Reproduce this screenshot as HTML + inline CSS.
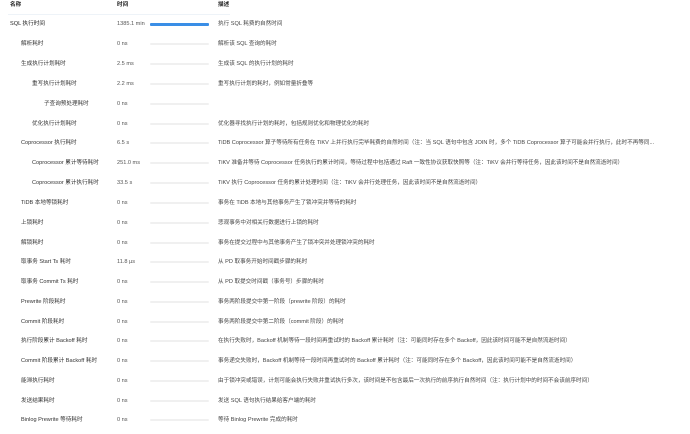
<!DOCTYPE html>
<html><head><meta charset="utf-8"><style>
html,body{margin:0;padding:0;background:#fff;width:690px;height:434px;overflow:hidden}
body{font-family:"Liberation Sans","Noto Sans CJK SC",sans-serif;font-size:5.6px;color:#333;position:relative}
.r{position:absolute;left:0;width:690px;height:10px;line-height:10px;white-space:nowrap}
.n{position:absolute}
.t{position:absolute;left:117px;color:#555}
.b{position:absolute;left:150px;top:4px;width:59px;height:2px;background:#f0f0f0;border-radius:1px}
.d{position:absolute;left:218px;color:#444}
.h{font-weight:bold;color:#222}
</style></head><body>
<div class="r h" style="top:0"><span class="n" style="left:10px">名称</span><span class="t" style="color:#222">时间</span><span class="d" style="color:#222">描述</span></div>
<div style="position:absolute;left:8px;top:14px;width:222px;height:1px;background:#eef3f8"></div>
<div class="r" style="top:19px"><span class="n" style="left:10px;color:#222">SQL 执行时间</span><span class="t">1385.1 min</span><span class="b" style="background:#3a8ee6;height:3px;top:3.5px"></span><span class="d">执行 SQL 耗费的自然时间</span></div>
<div class="r" style="top:39px"><span class="n" style="left:21px">解析耗时</span><span class="t">0 ns</span><span class="b"></span><span class="d">解析该 SQL 查询的耗时</span></div>
<div class="r" style="top:59px"><span class="n" style="left:21px">生成执行计划耗时</span><span class="t">2.5 ms</span><span class="b"></span><span class="d">生成该 SQL 的执行计划的耗时</span></div>
<div class="r" style="top:79px"><span class="n" style="left:32px">重写执行计划耗时</span><span class="t">2.2 ms</span><span class="b"></span><span class="d">重写执行计划的耗时，例如常量折叠等</span></div>
<div class="r" style="top:99px"><span class="n" style="left:44px">子查询预处理耗时</span><span class="t">0 ns</span><span class="b"></span></div>
<div class="r" style="top:119px"><span class="n" style="left:32px">优化执行计划耗时</span><span class="t">0 ns</span><span class="b"></span><span class="d">优化器寻找执行计划的耗时，包括规则优化和物理优化的耗时</span></div>
<div class="r" style="top:138px"><span class="n" style="left:21px">Coprocessor 执行耗时</span><span class="t">6.5 s</span><span class="b"></span><span class="d">TiDB Coprocessor 算子等待所有任务在 TiKV 上并行执行完毕耗费的自然时间（注：当 SQL 语句中包含 JOIN 时，多个 TiDB Coprocessor 算子可能会并行执行，此时不再等同...</span></div>
<div class="r" style="top:158px"><span class="n" style="left:32px">Coprocessor 累计等待耗时</span><span class="t">251.0 ms</span><span class="b"></span><span class="d">TiKV 准备并等待 Coprocessor 任务执行的累计时间，等待过程中包括通过 Raft 一致性协议获取快照等（注：TiKV 会并行等待任务，因此该时间不是自然流逝时间）</span></div>
<div class="r" style="top:178px"><span class="n" style="left:32px">Coprocessor 累计执行耗时</span><span class="t">33.5 s</span><span class="b"></span><span class="d">TiKV 执行 Coprocessor 任务的累计处理时间（注：TiKV 会并行处理任务，因此该时间不是自然流逝时间）</span></div>
<div class="r" style="top:198px"><span class="n" style="left:21px">TiDB 本地等锁耗时</span><span class="t">0 ns</span><span class="b"></span><span class="d">事务在 TiDB 本地与其他事务产生了锁冲突并等待的耗时</span></div>
<div class="r" style="top:218px"><span class="n" style="left:21px">上锁耗时</span><span class="t">0 ns</span><span class="b"></span><span class="d">悲观事务中对相关行数据进行上锁的耗时</span></div>
<div class="r" style="top:238px"><span class="n" style="left:21px">解锁耗时</span><span class="t">0 ns</span><span class="b"></span><span class="d">事务在提交过程中与其他事务产生了锁冲突并处理锁冲突的耗时</span></div>
<div class="r" style="top:257px"><span class="n" style="left:21px">取事务 Start Ts 耗时</span><span class="t">11.8 µs</span><span class="b"></span><span class="d">从 PD 取事务开始时间戳步骤的耗时</span></div>
<div class="r" style="top:277px"><span class="n" style="left:21px">取事务 Commit Ts 耗时</span><span class="t">0 ns</span><span class="b"></span><span class="d">从 PD 取提交时间戳（事务号）步骤的耗时</span></div>
<div class="r" style="top:297px"><span class="n" style="left:21px">Prewrite 阶段耗时</span><span class="t">0 ns</span><span class="b"></span><span class="d">事务两阶段提交中第一阶段（prewrite 阶段）的耗时</span></div>
<div class="r" style="top:317px"><span class="n" style="left:21px">Commit 阶段耗时</span><span class="t">0 ns</span><span class="b"></span><span class="d">事务两阶段提交中第二阶段（commit 阶段）的耗时</span></div>
<div class="r" style="top:336px"><span class="n" style="left:21px">执行阶段累计 Backoff 耗时</span><span class="t">0 ns</span><span class="b"></span><span class="d">在执行失败时，Backoff 机制等待一段时间再重试时的 Backoff 累计耗时（注：可能同时存在多个 Backoff，因此该时间可能不是自然流逝时间）</span></div>
<div class="r" style="top:356px"><span class="n" style="left:21px">Commit 阶段累计 Backoff 耗时</span><span class="t">0 ns</span><span class="b"></span><span class="d">事务递交失败时，Backoff 机制等待一段时间再重试时的 Backoff 累计耗时（注：可能同时存在多个 Backoff，因此该时间可能不是自然流逝时间）</span></div>
<div class="r" style="top:376px"><span class="n" style="left:21px">能滞执行耗时</span><span class="t">0 ns</span><span class="b"></span><span class="d">由于锁冲突或错误，计划可能会执行失败并重试执行多次，该时间是不包含最后一次执行的前序执行自然时间（注：执行计划中的时间不会该前序时间）</span></div>
<div class="r" style="top:396px"><span class="n" style="left:21px">发送结果耗时</span><span class="t">0 ns</span><span class="b"></span><span class="d">发送 SQL 语句执行结果给客户端的耗时</span></div>
<div class="r" style="top:415px"><span class="n" style="left:21px">Binlog Prewrite 等待耗时</span><span class="t">0 ns</span><span class="b"></span><span class="d">等待 Binlog Prewrite 完成的耗时</span></div>
</body></html>
